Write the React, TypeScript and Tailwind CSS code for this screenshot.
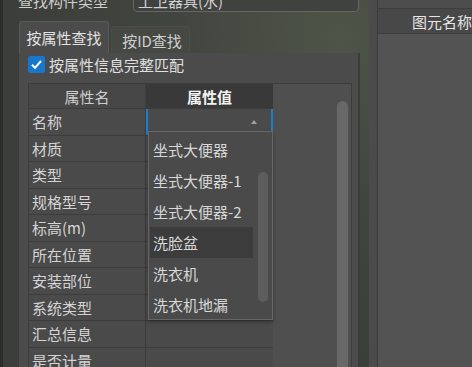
const rows = [
  "名称",
  "材质",
  "类型",
  "规格型号",
  "标高(m)",
  "所在位置",
  "安装部位",
  "系统类型",
  "汇总信息",
  "是否计量",
];

const options = ["坐式大便器", "坐式大便器-1", "坐式大便器-2", "洗脸盆", "洗衣机", "洗衣机地漏"];

function Check() {
  return (
    <div className="flex h-[17px] w-[17px] shrink-0 items-center justify-center rounded-[2px] bg-[#1677cc]">
      <svg width="13" height="13" viewBox="0 0 13 13">
        <path d="M2 6.8 L5 9.8 L11 3" fill="none" stroke="#ffffff" strokeWidth="2" />
      </svg>
    </div>
  );
}

export default function App() {
  return (
    <div className="relative flex h-[367px] w-[472px] overflow-hidden bg-[radial-gradient(ellipse_at_72%_10%,#4f5448_0%,#41453f_35%,#3b3e3a_70%)] font-[family-name:'Noto_Sans_CJK_SC',sans-serif] text-[15px] leading-none text-[#d6d6d6]">
      {/* left window edge */}
      <div className="w-[3px] shrink-0 bg-[#2c2c2c]" />

      {/* left panel */}
      <div className="flex w-[357px] shrink-0 flex-col pl-[15px]">
        {/* component type row, scrolled off the top */}
        <div className="-mt-[11px] flex h-[23px] items-center">
          <span className="w-[115px] shrink-0 text-[#cfcfcf]">查找构件类型</span>
          <div className="flex h-[23px] w-[226px] items-center rounded-b-[4px] border border-[#666] bg-[#40423f] px-[4px] text-[#d0d0d0]">
            工卫器具(水)
          </div>
        </div>

        {/* tabs */}
        <div className="mt-[9px] flex items-end">
          <div className="ml-[1px] flex h-[32px] w-[90px] items-center justify-center rounded-t-[3px] border border-b-0 border-[#5a5a5a] bg-[#4b4b4b] text-[#e2e2e2]">
            按属性查找
          </div>
          <div className="ml-[2px] flex h-[27px] w-[79px] items-center justify-center rounded-t-[3px] border border-b-0 border-[#4a4d48] bg-[#454843] pl-[3px] text-[#cfcfcf]">
            按ID查找
          </div>
        </div>

        {/* tab pane */}
        <div className="flex flex-1 flex-col border-r-2 border-l border-[#3c3c3c] bg-[#4b4b4b]">
          <div className="mt-[3px] flex items-center pl-[9px]">
            <Check />
            <span className="ml-[4px] text-[#e0e0e0]">按属性信息完整匹配</span>
          </div>

          <div className="ml-[9px] mt-[10px] flex w-[324px] flex-1 border border-[#3c3c3c]">
            <div className="flex w-[244px] shrink-0 flex-col">
              <div className="flex h-[25px] shrink-0 border-b border-[#3c3c3c]">
                <div className="flex w-[117px] items-center justify-center border-r border-[#3c3c3c] bg-[#474747] text-[#cfcfcf]">
                  属性名
                </div>
                <div className="flex w-[127px] items-center justify-center bg-[#393939] font-bold text-[#f2f2f2]">
                  属性值
                </div>
              </div>
              {rows.map((r, i) => (
                <div key={r} className="flex h-[26.5px] shrink-0 border-b border-[#3c3c3c]">
                  <div className="flex w-[117px] items-center border-r border-[#3c3c3c] bg-[#4a4a4a] pl-[3px] text-[#d4d4d4]">
                    {r}
                  </div>
                  {i === 0 ? (
                    <div className="flex w-[127px] items-center justify-end border-x-2 border-[#1a7fd1] bg-[#4a4a4a] pr-[14px]">
                      <svg width="6" height="4" viewBox="0 0 6 4">
                        <path d="M0 4 L3 0 L6 4 Z" fill="#a0a0a0" />
                      </svg>
                    </div>
                  ) : (
                    <div className="w-[127px] bg-[#4a4a4a]" />
                  )}
                </div>
              ))}
            </div>
            <div className="flex flex-1 bg-[#4f4f4f] pl-[64px] pt-[17px]">
              <div className="h-[300px] w-[11px] rounded-full bg-[#686868]" />
            </div>
          </div>
        </div>
      </div>

      {/* splitter */}
      <div className="ml-[9px] w-[8px] shrink-0 bg-[#4b4b4b]" />
      <div className="w-px shrink-0 bg-[#3a3a3a]" />

      {/* right panel */}
      <div className="flex flex-1 flex-col bg-[#4d4d4d] pt-[8px]">
        <div className="flex h-[26px] shrink-0 items-center border-y border-[#3e3e3e] bg-[#484848] pl-[34px] text-[#e6e6e6]">
          图元名称
        </div>
        <div className="flex-1 bg-[#535353]" />
      </div>

      {/* open dropdown list */}
      <div className="absolute left-[148px] top-[131px] flex h-[189px] w-[125px] border border-[#666] bg-[#4a4a4a] shadow-[0_2px_4px_rgba(0,0,0,0.3)]">
        <div className="flex w-[104px] flex-col pt-[2px] pl-px">
          {options.map((o) => (
            <div
              key={o}
              className={`flex h-[31px] shrink-0 items-center whitespace-nowrap pl-[3px] text-[#d8d8d8] ${o === "洗脸盆" ? "bg-[#3c3c3c]" : ""}`}
            >
              {o}
            </div>
          ))}
        </div>
        <div className="flex flex-1 justify-center pt-[40px]">
          <div className="h-[130px] w-[10px] rounded-full bg-[#5d5d5d]" />
        </div>
      </div>
    </div>
  );
}
